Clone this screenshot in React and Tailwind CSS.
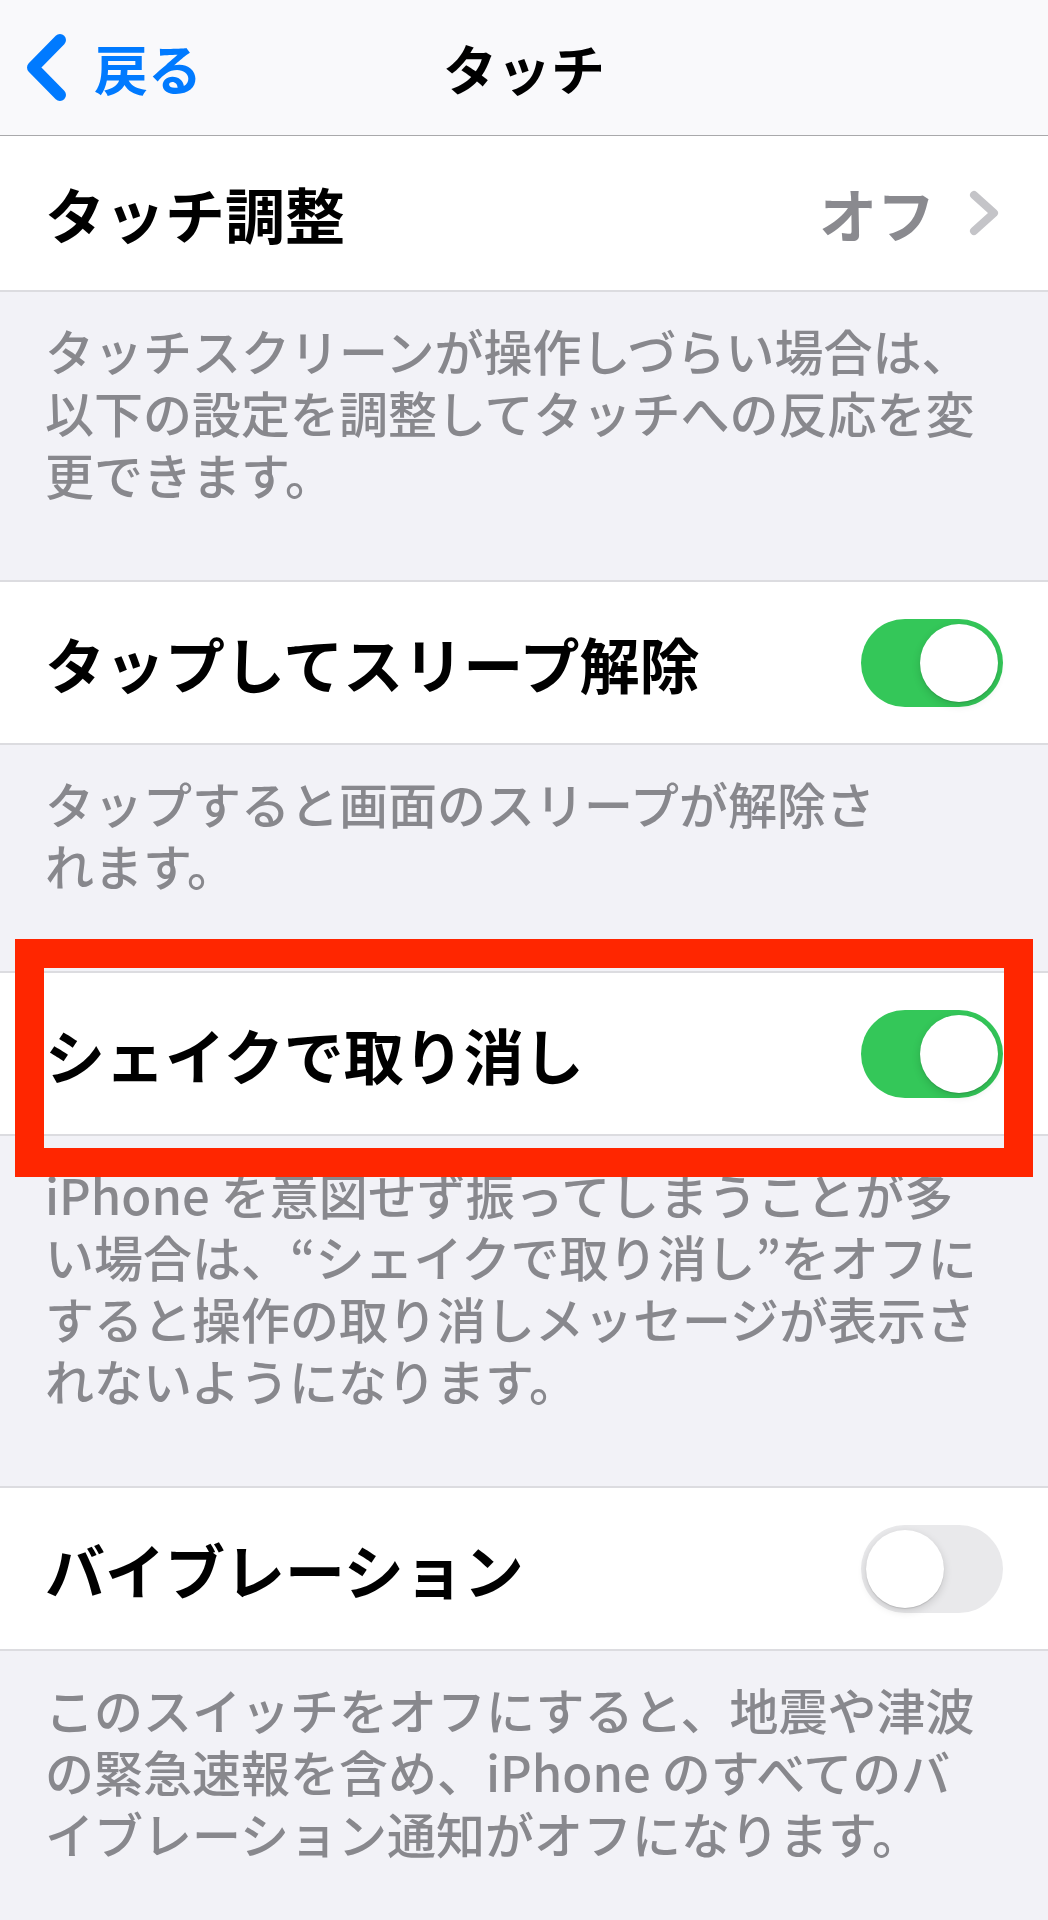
import React from 'react';

// iOS 設定 > アクセシビリティ > タッチ の画面

function Toggle({ on }) {
  return (
    <div
      className={
        on
          ? 'w-[142px] h-[88px] rounded-full bg-[#34c759] p-[5px] flex justify-end shrink-0'
          : 'w-[142px] h-[88px] rounded-full bg-[#e9e9eb] p-[5px] flex justify-start shrink-0'
      }
    >
      <div className="w-[78px] h-[78px] rounded-full bg-white shadow-[0_3px_8px_rgba(0,0,0,0.15),0_1px_1px_rgba(0,0,0,0.12)]" />
    </div>
  );
}

function Footer({ lines }) {
  return (
    <div className="bg-[#f2f2f7] pl-[45px] pr-[40px] pt-[27px] pb-[75px] text-[49px] leading-[62px] font-medium text-[#88888d] whitespace-nowrap">
      {lines.map((l, i) => (
        <div key={i}>{l}</div>
      ))}
    </div>
  );
}

function SwitchRow({ label, on }) {
  return (
    <div className="h-[165px] bg-white border-y-2 border-[#dcdce0] flex items-center justify-between pl-[45px] pr-[45px]">
      <span className="text-[60px] leading-none font-semibold text-black">{label}</span>
      <Toggle on={on} />
    </div>
  );
}

export default function App() {
  return (
    <div className="w-[1048px] min-h-[1920px] bg-[#f2f2f7] overflow-hidden font-['Noto_Sans_CJK_JP','Noto_Sans',sans-serif]">
      {/* ナビゲーションバー */}
      <div className="h-[136px] bg-[#f9f9fb] border-b border-[#a9a9ab] grid grid-cols-[1fr_auto_1fr] items-center">
        <div className="flex items-center gap-[27px] pl-[26px]">
          <svg width="41" height="69" viewBox="0 0 41 69" fill="none">
            <path d="M34 7 L7 34.5 L34 62" stroke="#007aff" strokeWidth="12" strokeLinecap="round" strokeLinejoin="round" />
          </svg>
          <span className="text-[54px] leading-none font-semibold text-[#007aff]">戻る</span>
        </div>
        <span className="text-[54px] leading-none font-bold text-black">タッチ</span>
        <div />
      </div>

      {/* タッチ調整 */}
      <div className="h-[156px] bg-white border-b-2 border-[#dcdce0] flex items-center justify-between pl-[45px] pr-[49px]">
        <span className="text-[60px] leading-none font-semibold text-black">タッチ調整</span>
        <div className="flex items-center gap-[34px]">
          <span className="text-[58px] leading-none font-semibold text-[#8a8a8f]">オフ</span>
          <svg width="30" height="46" viewBox="0 0 30 46" fill="none">
            <path d="M5 5 L25 23 L5 41" stroke="#c4c4c8" strokeWidth="8" strokeLinecap="round" strokeLinejoin="round" />
          </svg>
        </div>
      </div>
      <Footer
        lines={[
          'タッチスクリーンが操作しづらい場合は、',
          '以下の設定を調整してタッチへの反応を変',
          '更できます。',
        ]}
      />

      <SwitchRow label="タップしてスリープ解除" on />
      <Footer lines={['タップすると画面のスリープが解除さ', 'れます。']} />

      {/* 赤枠で囲まれた行 */}
      <div className="relative">
        <SwitchRow label="シェイクで取り消し" on />
        <div className="absolute top-[-32px] left-[15px] right-[15px] h-[238px] border-[29px] border-[#ff2600] z-10 pointer-events-none" />
      </div>
      <Footer
        lines={[
          'iPhone を意図せず振ってしまうことが多',
          'い場合は、“シェイクで取り消し”をオフに',
          'すると操作の取り消しメッセージが表示さ',
          'れないようになります。',
        ]}
      />

      <SwitchRow label="バイブレーション" on={false} />
      <Footer
        lines={[
          'このスイッチをオフにすると、地震や津波',
          'の緊急速報を含め、iPhone のすべてのバ',
          'イブレーション通知がオフになります。',
        ]}
      />
    </div>
  );
}
